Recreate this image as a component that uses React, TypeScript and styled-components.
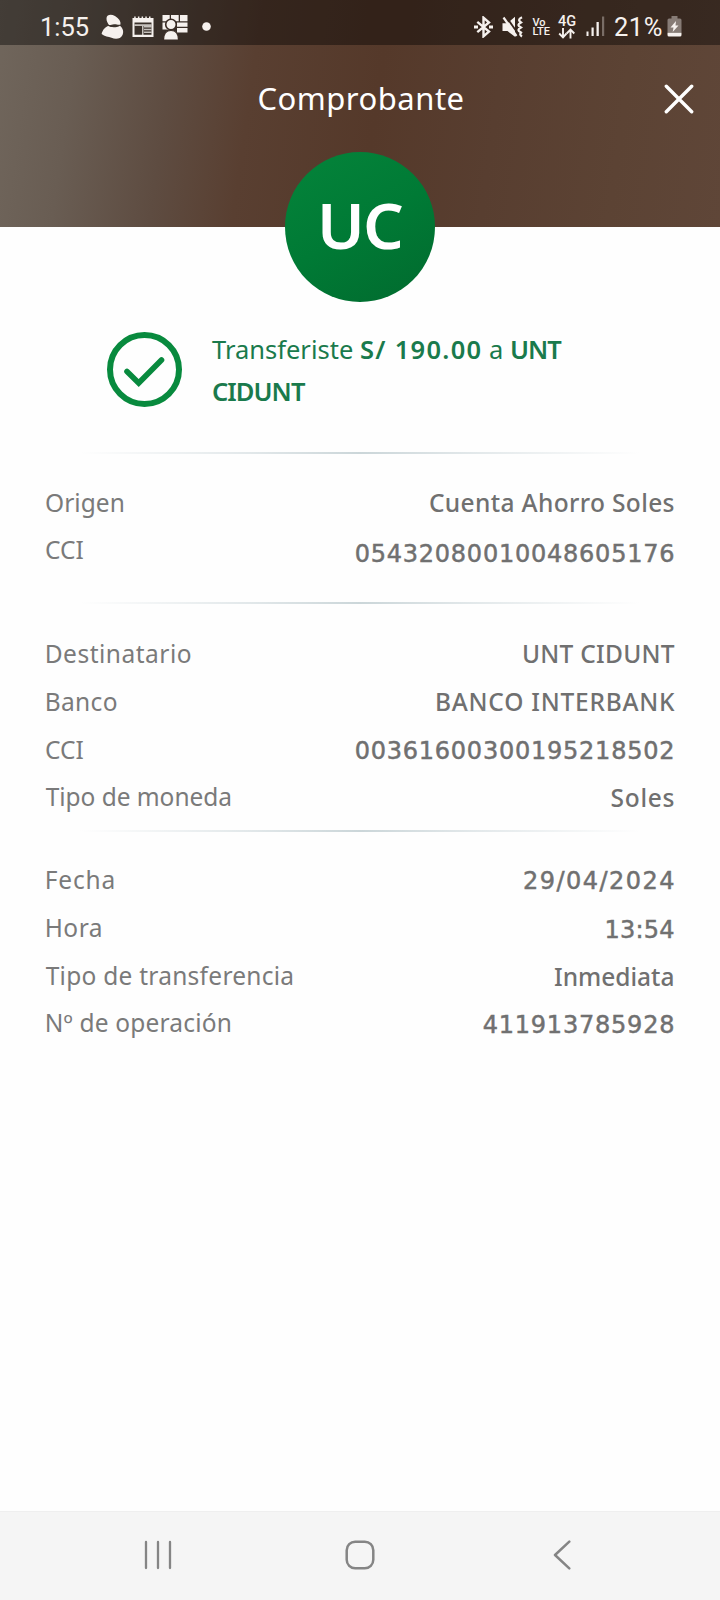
import React from 'react';
import styled, { createGlobalStyle, css } from 'styled-components';

const GlobalStyle = createGlobalStyle`
  *, *::before, *::after { box-sizing: border-box; }
  body { margin: 0; background: #fefefe; font-family: "Noto Sans", "Open Sans", sans-serif; }
`;

const Screen = styled.div`
  width: 720px;
  height: 1600px;
  display: flex;
  flex-direction: column;
  background: #fefefe;
  overflow: hidden;
`;

const Header = styled.header`
  height: 227px;
  flex: none;
  display: flex;
  flex-direction: column;
  background: linear-gradient(98deg, #70665c 0%, #695d53 11%, #5e4c41 24%, #593f31 35%, #55392a 52%, #583e30 68%, #5c4334 85%, #5f4638 100%);
`;

const StatusBar = styled.div`
  height: 45px;
  flex: none;
  display: flex;
  align-items: center;
  justify-content: space-between;
  padding: 8px 38.5px 0 40px;
  background: rgba(0, 0, 0, 0.4);
  color: #f6f1ee;
  font-family: Roboto, sans-serif;
`;

const StatusGroup = styled.div`
  display: flex;
  align-items: center;
  height: 37px;
`;

const StatusText = styled.span<{ $width: number; $spacing?: number; $gap?: number }>`
  width: ${(p) => p.$width}px;
  margin-left: ${(p) => p.$gap ?? 0}px;
  padding-top: 1px;
  font-size: 25.5px;
  line-height: 37px;
  white-space: nowrap;
  letter-spacing: ${(p) => p.$spacing ?? 0}px;
`;

const Glyph = styled.svg<{ $gap?: number }>`
  display: block;
  flex: none;
  margin-left: ${(p) => p.$gap ?? 0}px;
`;

const Network = styled.div<{ $width: number; $gap: number }>`
  width: ${(p) => p.$width}px;
  margin-left: ${(p) => p.$gap}px;
  display: flex;
  flex-direction: column;
  align-items: flex-start;
  white-space: nowrap;
`;

const NetworkLine = styled.span<{ $size: number; $height: number }>`
  font-size: ${(p) => p.$size}px;
  line-height: ${(p) => p.$height}px;
  font-weight: 500;
`;

const TitleBar = styled.div`
  display: grid;
  grid-template-columns: 72px 1fr 72px;
  align-items: center;
  height: 108px;
`;

const Title = styled.h1`
  grid-column: 2;
  margin: 0 0 2px 2px;
  text-align: center;
  font-size: 31px;
  font-weight: 400;
  line-height: 44px;
  letter-spacing: 0.5px;
  color: #fff;
`;

const CloseButton = styled.button`
  display: flex;
  justify-content: center;
  border: 0;
  padding: 0 10px 0 0;
  background: none;
`;

const Avatar = styled.div`
  flex: none;
  width: 150px;
  height: 150px;
  margin: -75px auto 0;
  border-radius: 50%;
  display: flex;
  align-items: center;
  justify-content: center;
  padding: 0 1px 6px 0;
  background: linear-gradient(150deg, #04833a 5%, #007a35 50%, #016c2f 95%);
  color: #fff;
  font-size: 64px;
  font-weight: 600;
  letter-spacing: -1.8px;
`;

const Summary = styled.section`
  display: flex;
  height: 123.5px;
  margin-top: 26px;
  padding-left: 107px;
  gap: 30px;
`;

const SummaryIcon = styled.svg`
  display: block;
  flex: none;
  margin-top: 3.7px;
`;

const Message = styled.p`
  margin: 1px 0 0;
  width: 370px;
  font-size: 25.5px;
  line-height: 41.7px;
  font-weight: 400;
  color: #1a7a4c;
`;

const Strong = styled.strong<{ $spacing: number }>`
  font-weight: 600;
  letter-spacing: ${(p) => p.$spacing}px;
`;

const Divider = styled.hr`
  flex: none;
  width: 560px;
  height: 2px;
  margin: 0 auto;
  border: 0;
  background: linear-gradient(90deg, rgba(206, 216, 219, 0), #e2e8ea 30%, #cbd6d9 50%, #e2e8ea 70%, rgba(206, 216, 219, 0));
`;

const Details = styled.dl<{ $top: number; $bottom: number }>`
  margin: 0;
  padding: ${(p) => p.$top}px 45.5px ${(p) => p.$bottom}px 44.7px;
`;

const Row = styled.div`
  display: flex;
  justify-content: space-between;
  height: 47.75px;
  font-size: 24.5px;
  line-height: 47.75px;
  color: #707070;
  white-space: nowrap;
`;

const Label = styled.dt<{ $spacing: number; $indent: number }>`
  font-weight: 400;
  color: #7a7a7a;
  letter-spacing: ${(p) => p.$spacing}px;
  padding-left: ${(p) => p.$indent}px;
`;

const Value = styled.dd<{ $spacing: number; $drop: number; $numeric: boolean }>`
  margin: 0 ${(p) => -p.$spacing}px 0 0;
  padding-top: ${(p) => p.$drop}px;
  font-weight: 500;
  letter-spacing: ${(p) => p.$spacing}px;
  ${(p) =>
    p.$numeric &&
    css`
      font-family: "DejaVu Sans", sans-serif;
      font-weight: 400;
      font-size: 24px;
      -webkit-text-stroke: 0.5px #707070;
    `}
`;

const NavBar = styled.nav`
  flex: none;
  height: 89px;
  margin-top: auto;
  display: grid;
  grid-template-columns: 316px 87px 317px;
  align-items: center;
  justify-items: center;
  background: #f5f5f5;
  border-top: 1px solid #efefef;
`;

const NavIcon = styled.svg`
  display: block;
  margin: 0 0 3px 0;
`;

type Field = {
  label: string;
  value: string;
  ls: number;
  vs: number;
  indent?: number;
  drop?: number;
  numeric?: boolean;
};

const origin: Field[] = [
  { label: 'Origen', value: 'Cuenta Ahorro Soles', ls: 0.05, vs: 0.36, indent: 0.3, drop: -2.5 },
  { label: 'CCI', value: '05432080010048605176', ls: 0, vs: 0.76, indent: 0.3, drop: 5, numeric: true },
];

const recipient: Field[] = [
  { label: 'Destinatario', value: 'UNT CIDUNT', ls: 0.5, vs: 0.25 },
  { label: 'Banco', value: 'BANCO INTERBANK', ls: 0.36, vs: 0.76 },
  { label: 'CCI', value: '00361600300195218502', ls: 0, vs: 0.76, indent: 0.3, drop: 2.2, numeric: true },
  { label: 'Tipo de moneda', value: 'Soles', ls: -0.05, vs: 0.75, indent: 1, drop: 1 },
];

const operation: Field[] = [
  { label: 'Fecha', value: '29/04/2024', ls: 0.85, vs: 1.45, drop: 2.2, numeric: true },
  { label: 'Hora', value: '13:54', ls: 0.5, vs: 0.2, drop: 3, numeric: true },
  { label: 'Tipo de transferencia', value: 'Inmediata', ls: 0.26, vs: 0, indent: 1, drop: 1 },
  { label: 'Nº de operación', value: '411913785928', ls: 0.18, vs: 0.78, drop: 3.2, numeric: true },
];

function Fields({ items, top, bottom }: { items: Field[]; top: number; bottom: number }) {
  return (
    <Details $top={top} $bottom={bottom}>
      {items.map((f) => (
        <Row key={f.label}>
          <Label $spacing={f.ls} $indent={f.indent ?? 0}>{f.label}</Label>
          <Value $spacing={f.vs} $drop={f.drop ?? 0} $numeric={!!f.numeric}>{f.value}</Value>
        </Row>
      ))}
    </Details>
  );
}

function Notifications() {
  return (
    <>
      <Glyph width="24" height="26" viewBox="0 0 24 26" $gap={6.5} fill="currentColor">
        <path d="M5.500 4C6 .5 10 0 14 2c4 2.500 6 5.500 5.500 8.500-2 1-4-.5-6.500-.3-2 .2-3.500 1-5 .8C7 9.500 5.200 7 5.500 4Z" />
        <path d="M.6 20C1.500 16 4.500 12.500 7.500 12c2 1.500 8 1.800 11.500-.3 3 2.500 4 6 2.500 9.300-2 4.200-7 4.500-11 2.800-3-1.200-7-1.300-9.900-3.800Z" />
      </Glyph>
      <Glyph width="22" height="22" viewBox="0 0 22 22" $gap={7.5} fill="currentColor">
        <path fillRule="evenodd" d="M.5 2h1.700V.5h1.500V2h2.200V.5h1.500V2h2.200V.5h1.500V2h2.200V.5h1.500V2H17V.5h1.500V2h3v19H.5V2Zm2 4.500V18.700h17V6.500h-17Z" />
        <path d="M2.500 8.300h17v1.700h-17zM12 10h7.500v1.600H12zM12 12.700h7.500v1.600H12zM12 15.400h7.500v1.600H12zM10 10h1.500v9H10z" opacity=".75" />
      </Glyph>
      <Glyph width="26" height="26" viewBox="0 0 26 26" $gap={7.5}>
        <path fill="currentColor" d="M.5 1h7.200v6.300H.5zM9 1h7.700v6.300H9zM18 1h7.500v6.300H18zM.5 8.500h7v7h-7zM15 8.500h10.500v4.300H15zM15 14h10.500v4.500H15z" />
        <circle cx="9" cy="10.500" r="5.300" fill="currentColor" stroke="#392b24" strokeWidth="1.600" />
        <path fill="currentColor" stroke="#392b24" strokeWidth="1.200" d="M1.500 26c0-6.500 2.500-9.500 7.500-9.500s7.500 3 7.500 9.500Z" />
      </Glyph>
      <Glyph width="9" height="9" viewBox="0 0 9 9" $gap={14}>
        <circle cx="4.500" cy="4.500" r="4.300" fill="currentColor" />
      </Glyph>
    </>
  );
}

function Connectivity() {
  return (
    <>
      <Glyph width="19" height="22" viewBox="0 0 19 22" fill="none" stroke="currentColor" strokeWidth="2.400">
        <path d="M3.300 5.800 15 15.500 9.500 20.300V1.700L15 6.500 3.300 16.200" />
        <path d="M0 11h4M15 11h4" strokeWidth="3" />
      </Glyph>
      <Glyph width="21" height="22" viewBox="0 0 21 22" $gap={9}>
        <path fill="currentColor" d="M.5 7.300h5L13 .8v20L5.500 15h-5z" />
        <path stroke="#36251d" strokeWidth="1.800" d="m4 .5 13 18.500" />
        <path stroke="currentColor" strokeWidth="2.200" d="m1.500 1.500 13 18.500" />
        <path fill="none" stroke="currentColor" strokeWidth="2.200" d="M20 1.200C15.500 3.500 17 5 19 6.500c-3.500 2-3.500 3 0 5-3.500 2-3.500 3 0 5-1.500 2-.5 3 1 4" />
      </Glyph>
      <Network $width={17} $gap={9.500}>
        <NetworkLine $size={11} $height={9}>Vo</NetworkLine>
        <NetworkLine $size={11} $height={9}>LTE</NetworkLine>
      </Network>
      <Network $width={18} $gap={8.500}>
        <NetworkLine $size={14.5} $height={13}>4G</NetworkLine>
        <Glyph width="17" height="11" viewBox="0 0 17 11" fill="none" stroke="currentColor" strokeWidth="1.900">
          <path d="M5 0v9M1.200 5.500 5 9.300l3.500-3.800M12.500 10.500V2M8.700 5.500 12.500 1.700l3.800 3.800" />
        </Glyph>
      </Network>
      <Glyph width="19" height="21" viewBox="0 0 19 21" $gap={10} fill="currentColor">
        <path d="M.5 15.500h2v4.500h-2zM5.500 11.500h2.200V20H5.500zM10.500 6h2.300v14h-2.300z" />
        <path d="M16 .5h2.200V20H16z" opacity=".35" />
      </Glyph>
    </>
  );
}

export default function App() {
  return (
    <>
      <GlobalStyle />
      <Screen>
        <Header>
          <StatusBar>
            <StatusGroup>
              <StatusText $width={54}>1:55</StatusText>
              <Notifications />
            </StatusGroup>
            <StatusGroup>
              <Connectivity />
              <StatusText $width={48.5} $spacing={0.5} $gap={9}>21%</StatusText>
              <Glyph width="15" height="21" viewBox="0 0 15 21" $gap={4} fill="currentColor">
                <path d="M4.500 0h6v2.500H13q1.500 0 1.500 1.500V16H.5V4Q.5 2.500 2 2.500h2.500z" opacity=".42" />
                <path d="M.5 16.500h14V19q0 1.500-1.500 1.500H2Q.5 20.500.5 19z" />
                <path d="M9 5 3.500 11.500h3L5.700 16 11.500 9.500h-3z" />
              </Glyph>
            </StatusGroup>
          </StatusBar>
          <TitleBar>
            <Title>Comprobante</Title>
            <CloseButton aria-label="Cerrar">
              <svg width="30" height="30" viewBox="0 0 30 30" fill="none" stroke="#fff" strokeWidth="3.400" strokeLinecap="round">
                <path d="M2.300 2.300 27.700 27.700M27.700 2.300 2.300 27.700" />
              </svg>
            </CloseButton>
          </TitleBar>
        </Header>
        <Avatar>UC</Avatar>
        <Summary>
          <SummaryIcon width="75" height="75" viewBox="0 0 75 75" fill="none" stroke="#088a3e">
            <circle cx="37.500" cy="37.500" r="34.500" strokeWidth="6" />
            <path d="M20 39.500 31.700 51 54.500 28" strokeWidth="5.600" strokeLinecap="round" />
          </SummaryIcon>
          <Message>
            Transferiste <Strong $spacing={1.3}>S/ 190.00</Strong> a <Strong $spacing={-0.95}>UNT CIDUNT</Strong>
          </Message>
        </Summary>
        <Divider />
        <Fields items={origin} top={25} bottom={28} />
        <Divider />
        <Fields items={recipient} top={26} bottom={8.5} />
        <Divider />
        <Fields items={operation} top={24.5} bottom={0} />
        <NavBar>
          <NavIcon width="28" height="30" viewBox="0 0 28 30" stroke="#858585" strokeWidth="2.300" strokeLinecap="round">
            <path d="M2 2v26M14 2v26M26 2v26" />
          </NavIcon>
          <NavIcon width="30" height="30" viewBox="0 0 30 30" fill="none" stroke="#858585" strokeWidth="2.500">
            <rect x="1.700" y="1.700" width="26.600" height="26.600" rx="8.500" />
          </NavIcon>
          <NavIcon width="18" height="30" viewBox="0 0 18 30" fill="none" stroke="#858585" strokeWidth="2.500" strokeLinecap="round" strokeLinejoin="round">
            <path d="M16.300 1.700 2 15l14.300 13.300" />
          </NavIcon>
        </NavBar>
      </Screen>
    </>
  );
}
